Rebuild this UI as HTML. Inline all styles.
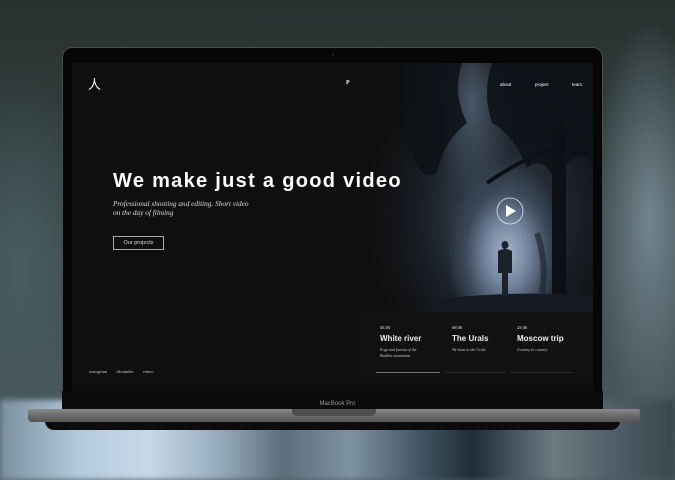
<!DOCTYPE html>
<html><head><style>
*{margin:0;padding:0;box-sizing:border-box}
body{width:675px;height:480px;overflow:hidden;position:relative;font-family:"Liberation Sans",sans-serif;
background:
radial-gradient(ellipse 60px 200px at 650px 220px,rgba(140,160,175,.7),transparent),
radial-gradient(ellipse 80px 180px at 20px 260px,rgba(80,105,110,.6),transparent),
linear-gradient(180deg,#27302f 0%,#33403f 30%,#3e4d50 60%,#4d5d63 100%);}
.bg2{position:absolute;left:0;top:400px;width:675px;height:80px;
background:linear-gradient(90deg,#7a90a0 0%,#b4cbdd 12%,#c6d9e9 22%,#93a9b9 33%,#5c6e7a 42%,#7d93a3 52%,#435664 62%,#1f2c37 70%,#6c7a82 82%,#4d5b64 92%,#3a464e 100%);filter:blur(3px)}
.bez{position:absolute;left:62px;top:47px;width:541px;height:356px;background:#060606;border-radius:10px 10px 0 0;border:1.5px solid #4a4d50;border-bottom:none}
.scr{position:absolute;left:72px;top:63px;width:521px;height:328px;background:#0f0f10;overflow:hidden}
.photo{position:absolute;left:270px;top:0;width:251px;height:249px;
background:radial-gradient(ellipse 60px 90px at 165px 190px,#a3b3c6 0%,#7586a0 35%,#3b4858 70%,transparent 100%),
radial-gradient(ellipse 40px 100px at 130px 40px,#4a5868 0%,transparent 100%),
radial-gradient(ellipse 130px 150px at 150px 150px,#364352 0%,#1c232b 60%,transparent 100%),#0f0f10;}
.photo:after{content:"";position:absolute;left:0;top:0;width:110px;height:249px;background:linear-gradient(90deg,#0f0f10,rgba(15,15,16,0))}
.cards{position:absolute;left:288px;top:249px;width:233px;height:67px;background:#111112}
.c{position:absolute;top:0;color:#eee}
.c .d{font-family:"Liberation Serif",serif;font-style:italic;font-size:4.5px;position:absolute;top:13px}
.c .t{font-weight:bold;font-size:8px;position:absolute;top:22px;white-space:nowrap}
.c .s{font-family:"Liberation Serif",serif;font-style:italic;font-size:4px;line-height:5.5px;position:absolute;top:35px;width:40px;color:#ccc}
.c .l{position:absolute;top:60px;height:1px;width:61px;background:#2e2e30}
.w{color:#fff;position:absolute}
.base{position:absolute;left:28px;top:409px;width:612px;height:13px;background:linear-gradient(#8a8a8c,#6b6b6d 50%,#555);border-radius:2px 2px 4px 4px}
.under{position:absolute;left:45px;top:421px;width:575px;height:9px;background:#0c0c0c;border-radius:0 0 20px 20px}
.notch{position:absolute;left:292px;top:409px;width:84px;height:7px;background:#4f4f51;border-radius:0 0 5px 5px}
</style></head><body>
<div class="bg2"></div>
<div class="bez"></div>
<div style="position:absolute;left:332px;top:54px;width:2px;height:2px;border-radius:1px;background:#1a2040"></div>
<div class="scr">
 <div class="photo">
  <svg width="251" height="249" style="position:absolute;left:0;top:0">
   <path d="M60 0 L120 0 Q110 30 125 60 Q100 80 95 110 Q80 120 70 90 Q50 70 60 40Z" fill="#0e1318" opacity=".9"/>
   <path d="M150 0 L251 0 L251 100 Q230 80 215 120 Q200 90 185 105 Q170 70 150 60 Q140 30 150 0Z" fill="#0e1318" opacity=".9"/>
   <rect x="210" y="60" width="14" height="189" fill="#0d1115"/>
   <path d="M145 120 Q180 95 226 80" stroke="#0d1115" stroke-width="4" fill="none"/>
   <path d="M100 249 L100 236 Q160 228 251 232 L251 249Z" fill="#141a20"/>
   <path d="M195 170 Q205 200 200 230" stroke="#1a2028" stroke-width="6" fill="none" opacity=".6"/>
   <ellipse cx="163" cy="182" rx="3.5" ry="4" fill="#1b2229"/>
   <path d="M156 188 Q163 184 170 188 L170 210 L166 210 L166 233 L160 233 L160 210 L156 210Z" fill="#1b2229"/>
   <circle cx="168" cy="148" r="13" fill="none" stroke="#dfe6ee" stroke-width=".8"/>
   <path d="M164 142 L174 148 L164 154Z" fill="#fff"/>
  </svg>
 </div>
 <div class="w" style="left:16px;top:14px;font-size:13px;font-family:'Noto Sans CJK SC',sans-serif;line-height:1">人</div>
 <div class="w" style="left:274px;top:17px;font-size:5px;font-weight:bold">ℙ</div>
 <div class="w" style="left:428px;top:19px;font-size:4.5px">about</div>
 <div class="w" style="left:463px;top:19px;font-size:4.5px">project</div>
 <div class="w" style="left:500px;top:19px;font-size:4.5px">team</div>
 <div class="w" style="left:41px;top:107px;font-size:20px;font-weight:bold;letter-spacing:1.3px;white-space:nowrap">We make just a good video</div>
 <div class="w" style="left:41px;top:137px;font-family:'Liberation Serif',serif;font-style:italic;font-size:7.3px;line-height:8.8px;color:#ddd">Professional shooting and editing. Short video<br>on the day of filming</div>
 <div class="w" style="left:41px;top:173px;width:51px;height:14px;border:1px solid #aaa;font-size:5.5px;line-height:12px;text-align:center;color:#ddd">Our projects</div>
 <div class="w" style="left:17px;top:306px;font-family:'Liberation Serif',serif;font-style:italic;font-size:4.5px;color:#ccc;word-spacing:8px">instagram vkontakte vimeo</div>
 <div class="cards">
  <div class="c" style="left:20px"><div class="d">05.05</div><div class="t">White river</div><div class="s">Fogs and forests of the Bashkir mountains</div><div class="l" style="background:#777;width:64px;left:-4px"></div></div>
  <div class="c" style="left:92px"><div class="d">08.06</div><div class="t">The Urals</div><div class="s">We born in the Urals</div><div class="l" style="left:-7px"></div></div>
  <div class="c" style="left:157px"><div class="d">25.06</div><div class="t">Moscow trip</div><div class="s" style="width:60px">Country in country</div><div class="l" style="left:-6px"></div></div>
 </div>
</div>
<div style="position:absolute;left:62px;top:391px;width:541px;height:18px;background:#0a0a0a"></div>
<div style="position:absolute;left:0;top:401px;width:675px;text-align:center;font-size:6px;color:#999">MacBook Pro</div>
<div class="under"></div>
<div class="base"></div>
<div class="notch"></div>
</body></html>
